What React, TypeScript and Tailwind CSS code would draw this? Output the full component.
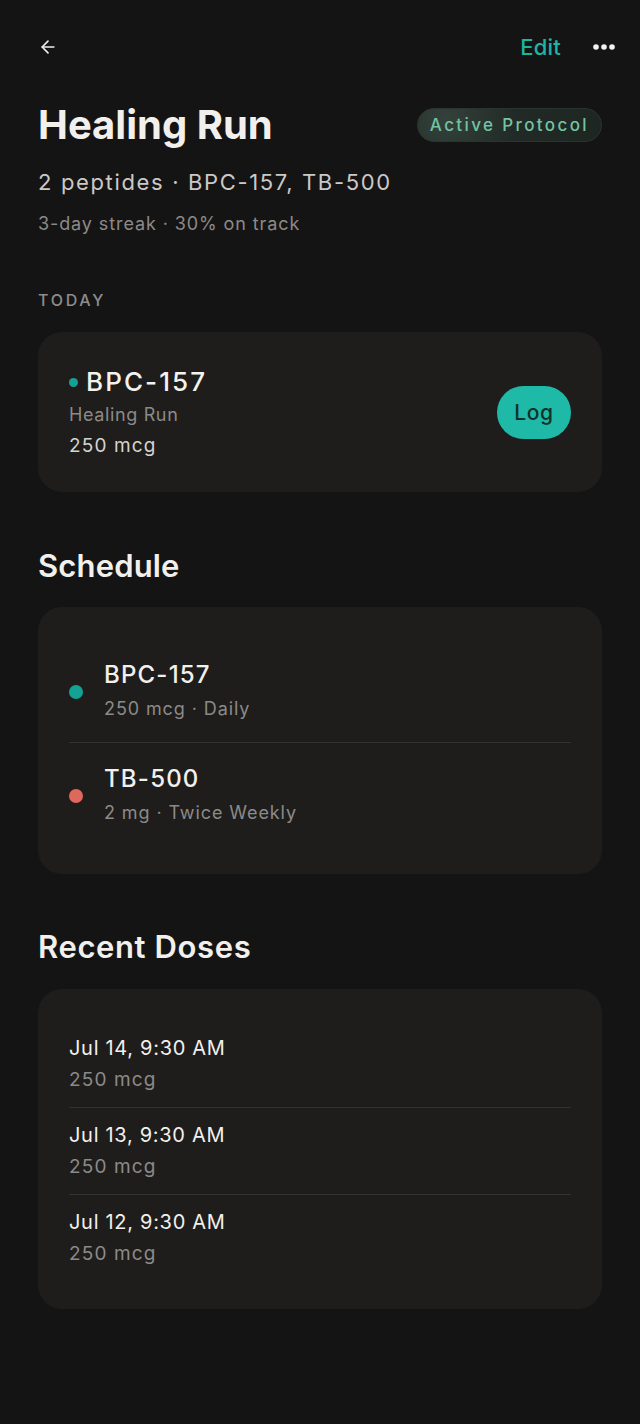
import { ArrowLeft } from "lucide-react";

const schedule = [
  { name: "BPC-157", detail: "250 mcg · Daily", dot: "bg-[#14a294]" },
  { name: "TB-500", detail: "2 mg · Twice Weekly", dot: "bg-[#e0675b]" },
];

const doses = [
  { when: "Jul 14, 9:30 AM", amount: "250 mcg" },
  { when: "Jul 13, 9:30 AM", amount: "250 mcg" },
  { when: "Jul 12, 9:30 AM", amount: "250 mcg" },
];

export default function App() {
  return (
    <div className="min-h-screen bg-[#151414] px-[38px] pb-20 pt-[25px] font-['Inter','Liberation_Sans',sans-serif] text-[#f2f0ec]">
      <header className="flex h-[44px] items-center justify-between">
        <button className="text-[#eeeeee]" aria-label="Back">
          <ArrowLeft size={20} strokeWidth={2} />
        </button>
        <div className="-mr-[13px] flex items-center gap-[32px]">
          <span className="text-[22px] font-medium tracking-[0.01em] text-[#1cb5a2]">Edit</span>
          <svg width="22" height="6" viewBox="0 0 22 6" fill="#f2f2f2">
            <circle cx="3" cy="3" r="2.8" />
            <circle cx="11" cy="3" r="2.8" />
            <circle cx="19" cy="3" r="2.8" />
          </svg>
        </div>
      </header>

      <div className="mt-[34px] flex items-center justify-between">
        <h1 className="text-[40px] font-bold leading-[44px] text-[#f2f0ec]">Healing Run</h1>
        <span className="rounded-full border border-[#2a3430] bg-[radial-gradient(circle_at_15%_30%,#34413b_0%,#212a26_45%,#1e2622_100%)] px-[12px] py-[5px] text-[17px] font-medium leading-[22px] tracking-[0.14em] text-[#73c3a3]">
          Active Protocol
        </span>
      </div>

      <p className="mt-[20px] text-[22px] leading-[30px] tracking-[0.075em] text-[#cbc9c6]">
        2 peptides · BPC-157, TB-500
      </p>
      <p className="mt-[14px] text-[18px] leading-[26px] tracking-[0.05em] text-[#8c8a88]">
        3-day streak · 30% on track
      </p>

      <p className="mt-[52px] text-[16px] font-medium leading-[22px] tracking-[0.17em] text-[#8e8c8a]">TODAY</p>

      <section className="mt-[21px] flex items-center justify-between rounded-[24px] bg-[#1e1d1c] pb-[33px] pl-[31px] pr-[31px] pt-[34px]">
        <div>
          <div className="flex items-center gap-[8px]">
            <span className="h-[9px] w-[9px] rounded-full bg-[#14a294]" />
            <span className="text-[26px] font-medium leading-[32px] tracking-[0.08em] text-[#f4f2ee]">BPC-157</span>
          </div>
          <p className="mt-[4px] text-[18px] leading-[26px] tracking-[0.035em] text-[#8c8a88]">Healing Run</p>
          <p className="mt-[5px] text-[19px] leading-[26px] tracking-[0.06em] text-[#d6d4d0]">250 mcg</p>
        </div>
        <button className="flex h-[53px] w-[74px] items-center justify-center rounded-full bg-[#1ebaa7] text-[21px] font-medium tracking-[0.03em] text-[#10302b]">
          Log
        </button>
      </section>

      <h2 className="mt-[56px] text-[31px] font-semibold leading-[36px] tracking-[0.005em] text-[#f2f0ec]">Schedule</h2>

      <section className="mt-[23px] rounded-[24px] bg-[#1e1d1c] px-[31px] pb-[28px] pt-[32px]">
        {schedule.map((item, i) => (
          <div
            key={item.name}
            className={`flex items-center gap-[21px] pb-[19px] pt-[22px] ${i > 0 ? "border-t border-[#333231]" : ""}`}
          >
            <span className={`h-[14px] w-[14px] shrink-0 rounded-full ${item.dot}`} />
            <div>
              <p className="text-[24px] font-medium leading-7 tracking-[0.05em] text-[#f2f0ec]">{item.name}</p>
              <p className="mt-[6px] text-[18px] leading-7 tracking-[0.05em] text-[#8c8a88]">{item.detail}</p>
            </div>
          </div>
        ))}
      </section>

      <h2 className="mt-[55px] text-[31px] font-semibold leading-[36px] tracking-[0.02em] text-[#f2f0ec]">
        Recent Doses
      </h2>

      <section className="mt-[24px] rounded-[24px] bg-[#1e1d1c] px-[31px] pb-[28px] pt-[32px]">
        {doses.map((d, i) => (
          <div key={d.when} className={`py-[13px] ${i > 0 ? "border-t border-[#333231]" : ""}`}>
            <p className="text-[20px] leading-7 tracking-[0.035em] text-[#f2f0ec]">{d.when}</p>
            <p className="mt-[4px] text-[19px] leading-7 tracking-[0.06em] text-[#8c8a88]">{d.amount}</p>
          </div>
        ))}
      </section>
    </div>
  );
}
